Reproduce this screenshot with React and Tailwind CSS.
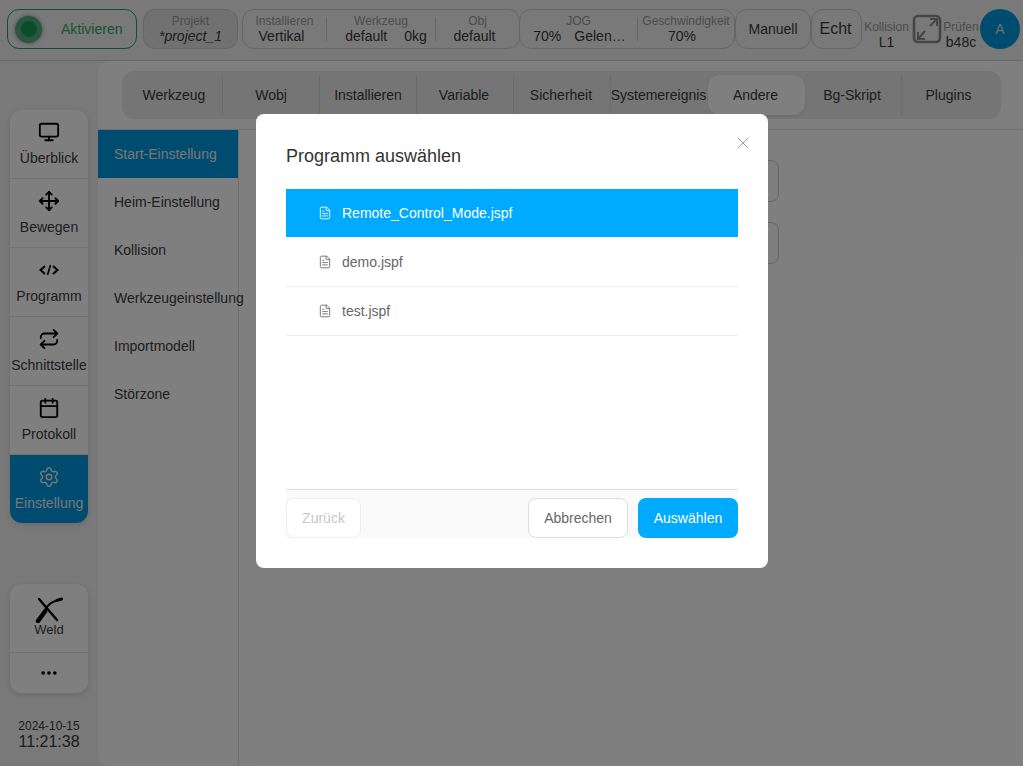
import React from "react";
import { Monitor, Move, Repeat, Calendar, Settings, Ellipsis, FileText, X } from "lucide-react";

const font = { fontFamily: '"Liberation Sans", Arial, sans-serif' };

function Cell({ label, children, className = "", valueClass = "" }) {
  return (
    <div className={"flex flex-col items-center justify-center h-full leading-none " + className}>
      <span className="text-[12px] leading-[14px] text-[#999]">{label}</span>
      <span className={"text-[14px] leading-[16px] text-[#3a3a3a] whitespace-nowrap " + valueClass}>{children}</span>
    </div>
  );
}

const Sep = () => <div className="w-px h-6 bg-[#ccc] shrink-0" />;

function TopBar() {
  return (
    <div className="h-[61px] shrink-0 border-b border-[#ccc] flex items-start pt-[9px] pl-[7px]">
      <div className="w-[130px] h-10 rounded-xl border border-[#2b9a63] flex items-center">
        <div className="ml-[7px] w-[27px] h-[27px] rounded-full bg-[#5aa886] flex items-center justify-center shadow-[0_0_4px_#5aa886]">
          <div className="w-4 h-4 rounded-full bg-[#129a58]" />
        </div>
        <span className="ml-[19px] text-[14px] text-[#2fa86c]">Aktivieren</span>
      </div>
      <div className="ml-1.5 w-[95px] h-10 rounded-xl border border-[#ccc] bg-[#e2e2e2] flex flex-col items-center justify-center">
        <span className="text-[12px] leading-[14px] text-[#999]">Projekt</span>
        <span className="text-[14px] leading-[16px] italic text-[#3a3a3a]">*project_1</span>
      </div>
      <div className="ml-1 w-[278px] h-10 rounded-xl border border-[#ccc] flex items-center">
        <Cell label="Installieren" className="w-[83px]" valueClass="pr-[6px]">Vertikal</Cell>
        <Sep />
        <Cell label="Werkzeug" className="w-[108px]" valueClass="pl-[10px]">
          <span>default</span><span className="ml-[17px]">0kg</span>
        </Cell>
        <Sep />
        <Cell label="Obj" className="flex-1" valueClass="pr-[6px]">default</Cell>
      </div>
      <div className="-ml-px w-[216px] h-10 rounded-xl border border-[#ccc] flex items-center">
        <Cell label="JOG" className="w-[117px]" valueClass="pl-[2px]">
          <span>70%</span><span className="ml-[13px]">Gelen…</span>
        </Cell>
        <Sep />
        <Cell label="Geschwindigkeit" className="flex-1" valueClass="pr-[8px]">70%</Cell>
      </div>
      <div className="w-[76px] h-10 rounded-xl border border-[#ccc] flex items-center justify-center text-[14px] text-[#3a3a3a]">Manuell</div>
      <div className="w-[51px] h-10 rounded-xl border border-[#ccc] flex items-center justify-center pr-[2px] text-[16px] text-[#3a3a3a]">Echt</div>
      <Cell label="Kollision" className="ml-0.5 w-[45px] h-10">L1</Cell>
      <svg className="ml-[3px] mt-[5px] shrink-0" width="30" height="30" viewBox="0 0 30 30" fill="none" stroke="#8c8c8c" strokeWidth="2.6">
        <rect x="2" y="2" width="26" height="26" rx="4" />
        <path d="M18 12 L25 5 M18 5 H25 V12 M13 17 L6 25 M6 18 V25 H13" strokeWidth="2" />
      </svg>
      <Cell label="Prüfen" className="ml-px w-9 h-10">b48c</Cell>
      <div className="ml-px w-10 h-10 rounded-full bg-[#0096e0] flex items-center justify-center text-[14px] text-[#ddd]">A</div>
    </div>
  );
}

function NavItem({ icon, label, active }) {
  return (
    <div className={"flex flex-col items-center " + (active ? "h-[68px] bg-[#0096e0] text-[#eee]" : "h-[69px] border-b border-[#e6e6e6] text-[#3a3a3a]")}>
      <div className={"h-[22px] mt-[11px] flex items-center justify-center " + (active ? "text-[#eee]" : "text-black")}>{icon}</div>
      <span className="mt-[6px] text-[14px] leading-[18px] whitespace-nowrap">{label}</span>
    </div>
  );
}

function CodeIcon() {
  return (
    <svg width="20" height="12" viewBox="0 0 20 12" fill="none" stroke="currentColor" strokeWidth="2">
      <path d="M6 2 L1.5 6 L6 10 M14 2 L18.5 6 L14 10" />
      <path d="M11.5 1 L8.5 11" strokeWidth="1.6" />
    </svg>
  );
}

function Sidebar() {
  return (
    <div className="w-[98px] shrink-0 flex flex-col px-2.5">
      <div className="mt-[49px] rounded-xl bg-white overflow-hidden shadow-[0_2px_6px_rgba(0,0,0,0.12)]">
        <NavItem icon={<Monitor size={22} strokeWidth={2} />} label="Überblick" />
        <NavItem icon={<Move size={22} strokeWidth={2} />} label="Bewegen" />
        <NavItem icon={<CodeIcon />} label="Programm" />
        <NavItem icon={<Repeat size={22} strokeWidth={2} />} label="Schnittstelle" />
        <NavItem icon={<Calendar size={22} strokeWidth={2} />} label="Protokoll" />
        <NavItem icon={<Settings size={22} strokeWidth={1.6} />} label="Einstellung" active />
      </div>
      <div className="mt-[61px] rounded-xl bg-white overflow-hidden shadow-[0_2px_6px_rgba(0,0,0,0.12)]">
        <div className="h-[69px] border-b border-[#e6e6e6] flex flex-col items-center pt-[12px]">
          <svg width="28" height="27" viewBox="0 0 28 27" fill="none" stroke="#000" strokeLinecap="round">
            <path d="M4 3 L22 24" strokeWidth="2.4" />
            <path d="M3 25 L10 15.5" strokeWidth="4.5" />
            <path d="M10 14 C12 10 16 6 22 4.5" strokeWidth="2" />
            <path d="M22 4.4 L26.5 3" strokeWidth="3" />
          </svg>
          <span className="text-[13px] leading-[15px] text-[#3a3a3a] mt-[-1px]">Weld</span>
        </div>
        <div className="h-10 flex items-center justify-center text-black">
          <Ellipsis size={20} strokeWidth={2.4} />
        </div>
      </div>
      <div className="mt-[26px] flex flex-col items-center text-[#3a3a3a]">
        <span className="text-[12px] leading-[14px]">2024-10-15</span>
        <span className="text-[16px] leading-[17px]">11:21:38</span>
      </div>
    </div>
  );
}

const tabs = [
  { t: "Werkzeug", c: "border-r border-[#d9d9d9]" },
  { t: "Wobj", c: "border-r border-[#d9d9d9]" },
  { t: "Installieren", c: "border-r border-[#d9d9d9]" },
  { t: "Variable", c: "border-r border-[#d9d9d9] pr-[2px]" },
  { t: "Sicherheit", c: "border-r border-[#d9d9d9] pr-[2px]" },
  { t: "Systemereignis", c: "pr-[2px]" },
  { t: "Andere", c: "pr-[2px] bg-white rounded-xl shadow-[0_1px_3px_rgba(0,0,0,0.1)]" },
  { t: "Bg-Skript", c: "border-r border-[#d9d9d9] pr-[2px]" },
  { t: "Plugins", c: "pr-[4px]" },
];
const menu = ["Start-Einstellung", "Heim-Einstellung", "Kollision", "Werkzeugeinstellung", "Importmodell", "Störzone"];

function Main() {
  return (
    <div className="flex-1 bg-white rounded-tl-xl rounded-bl-xl flex flex-col min-w-0">
      <div className="h-[69px] shrink-0 border-b border-[#ddd] pt-[10px] pl-6">
        <div className="w-[879px] h-12 rounded-xl bg-[#ebebeb] p-1 grid grid-cols-[repeat(9,97px)]">
          {tabs.map(({ t, c }) => (
            <div key={t} className={"flex items-center justify-center text-[14px] text-[#3a3a3a] whitespace-nowrap " + c}>
              {t}
            </div>
          ))}
        </div>
      </div>
      <div className="flex-1 flex min-h-0">
        <div className="w-[141px] shrink-0 border-r border-[#ddd] flex flex-col">
          {menu.map((m, i) => (
            <div key={m} className={"h-12 flex items-center pl-4 text-[14px] whitespace-nowrap " + (i === 0 ? "bg-[#0096e0] text-[#eee]" : "text-[#3a3a3a]")}>{m}</div>
          ))}
        </div>
        <div className="flex-1 flex flex-col gap-5 pt-[30px] pl-[30px]">
          <div className="w-[510px] h-[42px] rounded-lg border border-[#ccc]" />
          <div className="w-[510px] h-[42px] rounded-lg border border-[#ccc]" />
        </div>
      </div>
    </div>
  );
}

function Row({ name, selected }) {
  return (
    <div className={"flex items-center pl-8 text-[14px] " + (selected ? "h-12 mb-px bg-[#00aaff] text-white" : "h-[49px] border-b border-[#eee] text-[#666]")}>
      <FileText size={14} strokeWidth={1.5} />
      <span className="ml-[10px]">{name}</span>
    </div>
  );
}

function Modal() {
  return (
    <div className="absolute left-[256px] top-[114px] w-[512px] h-[454px] rounded-lg bg-white flex flex-col px-[30px]">
      <X size={20} strokeWidth={1} className="absolute right-[15px] top-[19px] text-[#888]" />
      <div className="mt-[31px] text-[18px] leading-[22px] text-[#333]">Programm auswählen</div>
      <div className="mt-[22px] flex-1 flex flex-col">
        <Row name="Remote_Control_Mode.jspf" selected />
        <Row name="demo.jspf" />
        <Row name="test.jspf" />
      </div>
      <div className="mb-[30px] h-[49px] border-t border-[#ddd] bg-[#fafafa] pt-2 flex items-start text-[14px]">
        <div className="w-[75px] h-10 rounded-lg border border-[#eee] bg-white text-[#c8c8c8] flex items-center justify-center">Zurück</div>
        <div className="ml-auto w-[100px] h-10 rounded-lg border border-[#ddd] bg-white text-[#666] flex items-center justify-center">Abbrechen</div>
        <div className="ml-2.5 w-[100px] h-10 rounded-lg bg-[#00aaff] text-white flex items-center justify-center">Auswählen</div>
      </div>
    </div>
  );
}

export default function App() {
  return (
    <div style={font} className="relative w-[1023px] h-[766px] overflow-hidden bg-[#f2f2f2] flex flex-col">
      <TopBar />
      <div className="flex-1 flex min-h-0">
        <Sidebar />
        <Main />
      </div>
      <div className="absolute inset-0 bg-black/50" />
      <Modal />
    </div>
  );
}
